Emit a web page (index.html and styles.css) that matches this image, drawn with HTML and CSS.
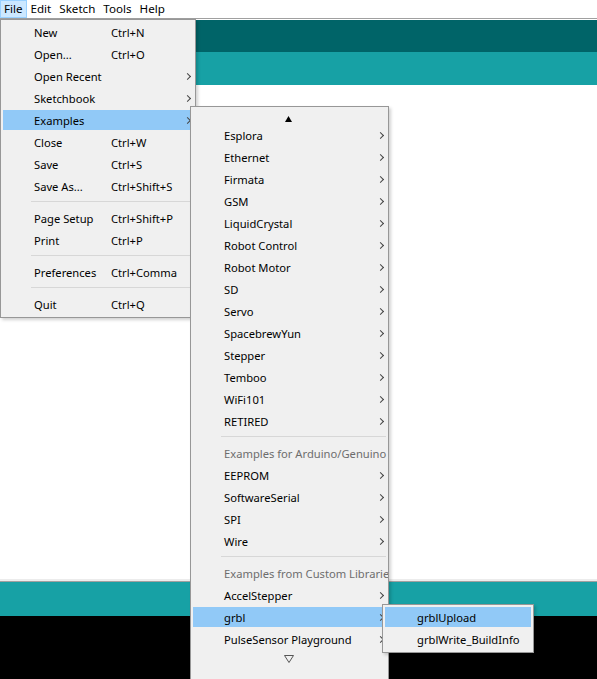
FILE: index.html
```html
<!DOCTYPE html>
<html>
<head>
<meta charset="utf-8">
<link rel="stylesheet" href="styles.css">
</head>
<body>
<div class="app">
  <div class="menubar">
    <span class="mb-item active">File</span>
    <span class="mb-item">Edit</span>
    <span class="mb-item">Sketch</span>
    <span class="mb-item">Tools</span>
    <span class="mb-item">Help</span>
  </div>
  <div class="toolbar"></div>
  <div class="tabs"></div>
  <div class="editor"></div>
  <div class="status"></div>
  <div class="console"></div>

  <div class="menu file-menu">
    <div class="item"><span class="label">New</span><span class="key">Ctrl+N</span></div>
    <div class="item"><span class="label">Open...</span><span class="key">Ctrl+O</span></div>
    <div class="item"><span class="label">Open Recent</span><span class="chev"></span></div>
    <div class="item"><span class="label">Sketchbook</span><span class="chev"></span></div>
    <div class="item hl"><span class="label">Examples</span><span class="chev"></span></div>
    <div class="item"><span class="label">Close</span><span class="key">Ctrl+W</span></div>
    <div class="item"><span class="label">Save</span><span class="key">Ctrl+S</span></div>
    <div class="item"><span class="label">Save As...</span><span class="key">Ctrl+Shift+S</span></div>
    <div class="sep"></div>
    <div class="item"><span class="label">Page Setup</span><span class="key">Ctrl+Shift+P</span></div>
    <div class="item"><span class="label">Print</span><span class="key">Ctrl+P</span></div>
    <div class="sep"></div>
    <div class="item"><span class="label">Preferences</span><span class="key">Ctrl+Comma</span></div>
    <div class="sep"></div>
    <div class="item"><span class="label">Quit</span><span class="key">Ctrl+Q</span></div>
  </div>

  <div class="menu examples-menu">
    <div class="scroll-up"><svg width="7" height="6" viewBox="0 0 7 6"><polygon points="3.5,0 7,6 0,6" fill="#000"/></svg></div>
    <div class="item"><span>Esplora</span><span class="chev"></span></div>
    <div class="item"><span>Ethernet</span><span class="chev"></span></div>
    <div class="item"><span>Firmata</span><span class="chev"></span></div>
    <div class="item"><span>GSM</span><span class="chev"></span></div>
    <div class="item"><span>LiquidCrystal</span><span class="chev"></span></div>
    <div class="item"><span>Robot Control</span><span class="chev"></span></div>
    <div class="item"><span>Robot Motor</span><span class="chev"></span></div>
    <div class="item"><span>SD</span><span class="chev"></span></div>
    <div class="item"><span>Servo</span><span class="chev"></span></div>
    <div class="item"><span>SpacebrewYun</span><span class="chev"></span></div>
    <div class="item"><span>Stepper</span><span class="chev"></span></div>
    <div class="item"><span>Temboo</span><span class="chev"></span></div>
    <div class="item"><span>WiFi101</span><span class="chev"></span></div>
    <div class="item"><span>RETIRED</span><span class="chev"></span></div>
    <div class="sep"></div>
    <div class="item header"><span>Examples for Arduino/Genuino</span></div>
    <div class="item"><span>EEPROM</span><span class="chev"></span></div>
    <div class="item"><span>SoftwareSerial</span><span class="chev"></span></div>
    <div class="item"><span>SPI</span><span class="chev"></span></div>
    <div class="item"><span>Wire</span><span class="chev"></span></div>
    <div class="sep"></div>
    <div class="item header"><span>Examples from Custom Libraries</span></div>
    <div class="item"><span>AccelStepper</span><span class="chev"></span></div>
    <div class="item hl"><span>grbl</span><span class="chev"></span></div>
    <div class="item"><span>PulseSensor Playground</span><span class="chev"></span></div>
    <div class="scroll-down"><svg width="10" height="8" viewBox="0 0 10 8"><polygon points="0.5,0.5 9.5,0.5 5,7.5" fill="none" stroke="#555" stroke-width="1"/></svg></div>
  </div>

  <div class="menu grbl-menu">
    <div class="item hl"><span>grblUpload</span></div>
    <div class="item"><span>grblWrite_BuildInfo</span></div>
  </div>
</div>
</body>
</html>
```
FILE: styles.css
```css
html, body {
  margin: 0;
  padding: 0;
}
body {
  width: 597px;
  height: 679px;
  overflow: hidden;
  font-family: "Noto Sans", "Open Sans", sans-serif;
  font-size: 11.2px;
  color: #000;
  background: #fff;
}
.app {
  position: relative;
  height: 679px;
  display: flex;
  flex-direction: column;
}
.menubar {
  height: 18px;
  border-bottom: 1px solid #a0a0a0;
  margin-bottom: 1px;
  display: flex;
  background: #fff;
  font-size: 11.6px;
}
.mb-item {
  padding: 0 3px;
  line-height: 16px;
  border: 1px solid transparent;
}
.mb-item.active {
  background: #cce8ff;
  border-color: #99d1ff;
}
.toolbar {
  height: 32px;
  background: #006468;
}
.tabs {
  height: 33px;
  background: #17a1a5;
}
.editor {
  flex: 1;
  background: #fff;
  border-bottom: 1px solid #a0a0a0;
  box-shadow: inset 0 -2px 0 #ececec;
}
.status {
  height: 34px;
  background: #17a1a5;
}
.console {
  height: 63px;
  background: #000;
}

.menu {
  position: absolute;
  box-sizing: border-box;
  background: #f0f0f0;
  border: 1px solid #979797;
  padding: 1px 1px 2px 2px;
  overflow: hidden;
  box-shadow: 2px 2px 3px rgba(0, 0, 0, 0.18);
}
.file-menu {
  left: 0;
  top: 19px;
  width: 196px;
}
.examples-menu {
  left: 190px;
  top: 106px;
  width: 199px;
  height: 580px;
}
.grbl-menu {
  left: 382px;
  top: 604px;
  width: 152px;
  padding: 1px 2px 2px 2px;
}
.item {
  height: 22px;
  box-sizing: border-box;
  border-top: 1px solid transparent;
  border-bottom: 1px solid transparent;
  background-clip: padding-box;
  display: flex;
  align-items: center;
  padding-left: 31px;
  white-space: nowrap;
}
.grbl-menu .item {
  padding-left: 32px;
}
.item.hl {
  background-color: #91c9f7;
}
.item.header {
  color: #6d6d6d;
}
.label {
  width: 77px;
  flex: none;
}
.chev {
  margin-left: auto;
  margin-right: 4px;
  width: 4px;
  height: 4px;
  border-top: 1px solid #444;
  border-right: 1px solid #444;
  transform: rotate(45deg);
  flex: none;
}
.sep {
  height: 1px;
  background: #d7d7d7;
  margin: 4px 1px 5px 28px;
}
.scroll-up {
  height: 16px;
  display: flex;
  justify-content: center;
  align-items: flex-end;
}
.scroll-up svg {
  margin-bottom: 2px;
  margin-left: -3px;
}
.scroll-down {
  height: 18px;
  display: flex;
  justify-content: center;
  align-items: center;
}
.scroll-down svg {
  margin-left: -3px;
}
```
